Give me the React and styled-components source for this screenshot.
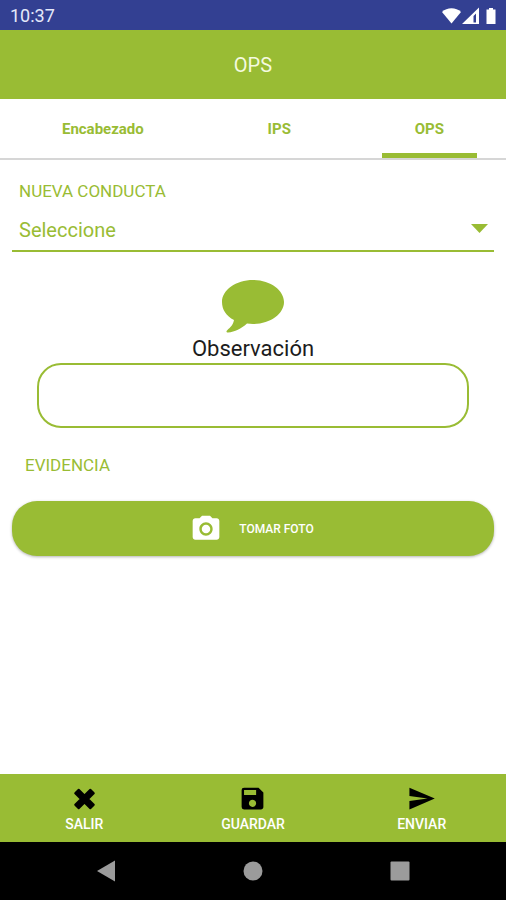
import React, { useState } from 'react';
import styled, { createGlobalStyle } from 'styled-components';
import { MdPhotoCamera, MdSave, MdSend } from 'react-icons/md';

const green = '#99bc34';

const GlobalStyle = createGlobalStyle`
  * {
    box-sizing: border-box;
  }

  body {
    margin: 0;
    background: #fff;
    font-family: Roboto, 'Liberation Sans', sans-serif;
  }

  button,
  input,
  select {
    font-family: inherit;
  }
`;

const Screen = styled.div`
  display: flex;
  flex-direction: column;
  min-height: 100vh;
`;

const StatusBar = styled.div`
  display: flex;
  align-items: center;
  justify-content: space-between;
  height: 30px;
  padding: 1px 8px 0 10px;
  background: #334092;
  color: #e4e8fa;
  font-size: 18px;
`;

const StatusIcons = styled.svg`
  width: 56px;
  height: 18px;
`;

const Header = styled.header`
  display: flex;
  align-items: center;
  justify-content: center;
  height: 69px;
  padding-top: 1px;
  background: ${green};
`;

const Title = styled.h1`
  margin: 0;
  color: #f4fadf;
  font-size: 20px;
  font-weight: 400;
`;

const Tabs = styled.nav`
  display: flex;
  justify-content: space-around;
  height: 61px;
  border-bottom: 2px solid #d6d6d6;
`;

const Tab = styled.button`
  padding: 6px 33px 0;
  border: 0;
  border-bottom: 5px solid ${props => (props.$active ? green : 'transparent')};
  background: none;
  color: ${green};
  font-size: 15px;
  font-weight: 700;
`;

const Content = styled.main`
  display: flex;
  flex: 1;
  flex-direction: column;
  padding: 19px 12px;
`;

const Label = styled.label`
  padding-left: 7px;
  color: ${green};
  font-size: 17px;
  line-height: 24px;
`;

const SelectBox = styled.div`
  display: grid;
  align-items: center;
  margin-top: 4px;
  border-bottom: 2px solid ${green};
`;

const Select = styled.select`
  grid-area: 1 / 1;
  width: 100%;
  height: 43px;
  padding: 2px 40px 0 7px;
  border: 0;
  appearance: none;
  background: none;
  color: ${green};
  font-size: 20px;
`;

const Caret = styled.svg`
  grid-area: 1 / 1;
  justify-self: end;
  width: 17px;
  height: 9px;
  margin-right: 6px;
  pointer-events: none;
`;

const Observation = styled.div`
  display: flex;
  flex-direction: column;
  align-items: center;
  padding: 28px 25px 0;
`;

const CommentIcon = styled.svg`
  width: 62px;
  height: 53px;
`;

const ObservationLabel = styled.label`
  margin-top: 2px;
  color: #1c1c1c;
  font-size: 22px;
  line-height: 28px;
`;

const ObservationInput = styled.input`
  width: 100%;
  height: 65px;
  padding: 0 20px;
  border: 2px solid ${green};
  border-radius: 24px;
  background: #fff;
  font-size: 18px;
`;

const SectionTitle = styled.h2`
  margin: 25px 0 0;
  padding-left: 13px;
  color: ${green};
  font-size: 17px;
  font-weight: 400;
  line-height: 24px;
`;

const PhotoButton = styled.button`
  display: flex;
  align-items: center;
  justify-content: center;
  gap: 17px;
  height: 55px;
  margin-top: 24px;
  padding: 0 8px 0 6px;
  border: 0;
  border-radius: 25px;
  background: ${green};
  box-shadow: 0 1px 3px rgba(0, 0, 0, 0.3);
  color: #fff;
  font-size: 12px;
  font-weight: 500;
`;

const ActionBar = styled.footer`
  display: grid;
  grid-template-columns: repeat(3, 1fr);
  height: 68px;
  background: ${green};
`;

const Action = styled.button`
  display: flex;
  flex-direction: column;
  align-items: center;
  gap: 2px;
  padding: 10px 0 0;
  border: 0;
  background: none;
  color: #fff;
  font-size: 14px;
  font-weight: 500;
  line-height: 18px;

  svg {
    width: 29px;
    height: 29px;
    color: #000;
  }
`;

const SystemNav = styled.nav`
  display: grid;
  grid-template-columns: repeat(3, 1fr);
  height: 58px;
  padding: 0 33px;
  background: #000;
`;

const SystemButton = styled.button`
  display: flex;
  align-items: center;
  justify-content: center;
  padding: 0;
  border: 0;
  background: none;

  svg {
    width: 20px;
    height: 22px;
    fill: #9b9b9b;
  }
`;

const CrossIcon = () => (
  <svg viewBox="0 0 29 29" fill="currentColor" stroke="currentColor" strokeWidth="2" strokeLinejoin="round">
    <path d="M8.700 5.700L14.500 11.500l5.800-5.800 3.500 3.500L18 15l5.800 5.800-3.500 3.500-5.800-5.800-5.800 5.800-3.500-3.500L11 15 5.200 9.200z" />
  </svg>
);

const tabs = ['Encabezado', 'IPS', 'OPS'];

const actions = [
  { label: 'SALIR', icon: <CrossIcon /> },
  { label: 'GUARDAR', icon: <MdSave /> },
  { label: 'ENVIAR', icon: <MdSend /> },
];

const App = () => {
  const [activeTab, setActiveTab] = useState('OPS');
  const [observation, setObservation] = useState('');

  return (
    <>
      <GlobalStyle />
      <Screen>
        <StatusBar>
          <span>10:37</span>
          <StatusIcons viewBox="0 0 56 18" fill="#fff" aria-hidden="true">
            <path d="M0 5C5 0 14 0 19 5L9.500 16.500z" />
            <path fillRule="evenodd" d="M20 17L37 0.500V17zM31.500 9v6.500h2.500V6.500z" />
            <path d="M47 1h4v1.500h2.500V17h-9V2.500H47z" />
          </StatusIcons>
        </StatusBar>

        <Header>
          <Title>OPS</Title>
        </Header>

        <Tabs>
          {tabs.map(tab => (
            <Tab key={tab} $active={tab === activeTab} onClick={() => setActiveTab(tab)}>
              {tab}
            </Tab>
          ))}
        </Tabs>

        <Content>
          <Label htmlFor="conducta">NUEVA CONDUCTA</Label>
          <SelectBox>
            <Select id="conducta">
              <option>Seleccione</option>
            </Select>
            <Caret viewBox="0 0 17 9" fill={green} aria-hidden="true">
              <path d="M0 0h17L8.500 9z" />
            </Caret>
          </SelectBox>

          <Observation>
            <CommentIcon viewBox="0 0 62 53" fill={green} aria-hidden="true">
              <path d="M31 0C48 0 62 10 62 22S48 44 31 44c-2 0-4 0-6-.4C19 49 13 52 6 52.600c-1.500 0-2-1.200-1-2.200 4-3.600 6-5.400 7-10.400C4 36 0 29.500 0 22 0 10 14 0 31 0z" />
            </CommentIcon>
            <ObservationLabel htmlFor="observacion">Observación</ObservationLabel>
            <ObservationInput
              id="observacion"
              value={observation}
              onChange={e => setObservation(e.target.value)}
            />
          </Observation>

          <SectionTitle>EVIDENCIA</SectionTitle>
          <PhotoButton>
            <MdPhotoCamera size={32} />
            TOMAR FOTO
          </PhotoButton>
        </Content>

        <ActionBar>
          {actions.map(action => (
            <Action key={action.label}>
              {action.icon}
              {action.label}
            </Action>
          ))}
        </ActionBar>

        <SystemNav>
          <SystemButton aria-label="Atrás">
            <svg viewBox="0 0 20 22">
              <path d="M1 11L19 0.500v21z" />
            </svg>
          </SystemButton>
          <SystemButton aria-label="Inicio">
            <svg viewBox="0 0 20 22">
              <circle cx="10" cy="11" r="9.500" />
            </svg>
          </SystemButton>
          <SystemButton aria-label="Recientes">
            <svg viewBox="0 0 20 22">
              <rect x="0.500" y="1.500" width="19" height="19" rx="1" />
            </svg>
          </SystemButton>
        </SystemNav>
      </Screen>
    </>
  );
};

export default App;
